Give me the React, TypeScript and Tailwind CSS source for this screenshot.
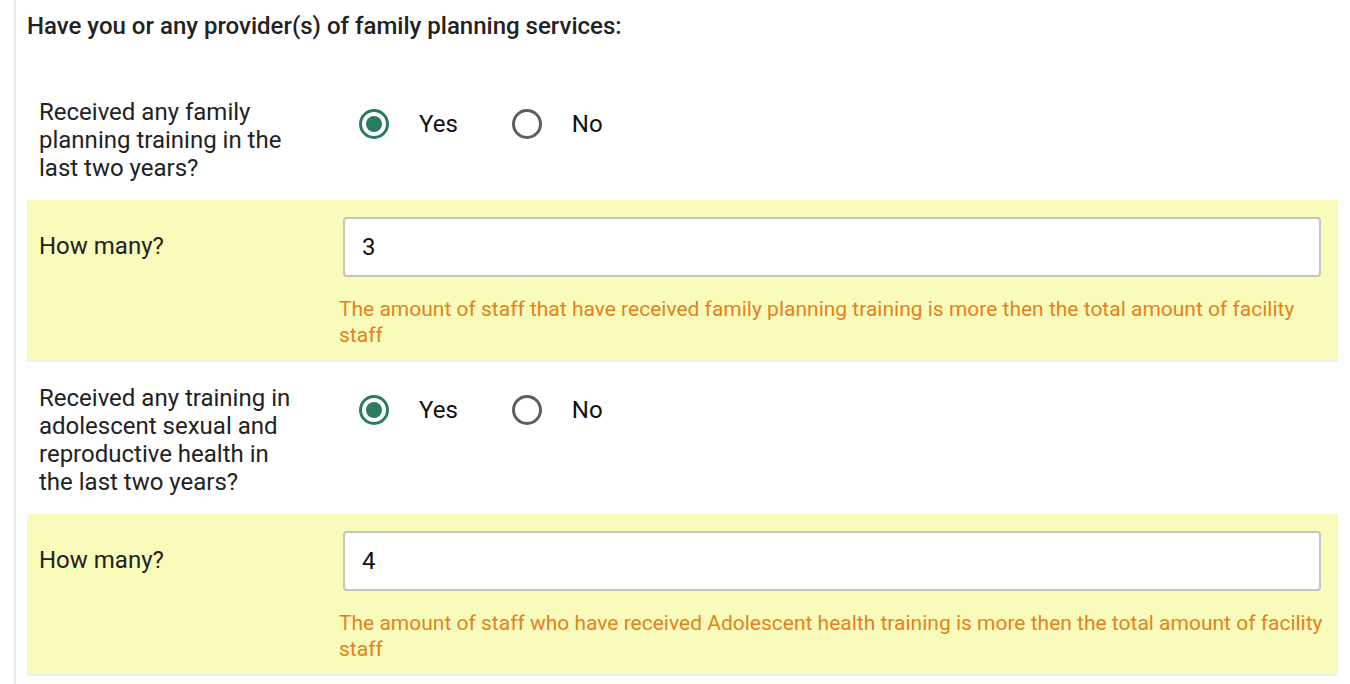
import { useState } from "react";

function Radio({ checked }: { checked: boolean }) {
  return (
    <span
      className={
        "flex h-[30px] w-[30px] items-center justify-center rounded-full border-[3px] " +
        (checked ? "border-[#2b7a62]" : "border-[#5e5e5e]")
      }
    >
      {checked && <span className="h-[16px] w-[16px] rounded-full bg-[#2b7a62]" />}
    </span>
  );
}

function YesNo({ value }: { value: string }) {
  const [v, setV] = useState(value);
  return (
    <div className="flex items-center pt-[16px] text-[24px] leading-7 text-[#111]">
      <button className="flex items-center" onClick={() => setV("yes")}>
        <Radio checked={v === "yes"} />
        <span className="ml-[30px]">Yes</span>
      </button>
      <button className="ml-[54px] flex items-center" onClick={() => setV("no")}>
        <Radio checked={v === "no"} />
        <span className="ml-[30px]">No</span>
      </button>
    </div>
  );
}

function QuestionRow({ label, value }: { label: string; value: string }) {
  return (
    <div className="flex px-3 pb-[18px]">
      <div className="w-[255px] shrink-0 pt-[5px] text-[24px] leading-7 text-[#222]">{label}</div>
      <div className="ml-[65px]">
        <YesNo value={value} />
      </div>
    </div>
  );
}

function CountRow({ value, warning }: { value: string; warning: string }) {
  return (
    <div className="flex border-b-2 border-[#efefef] bg-[#f8fbb9] pb-[12px] pl-3 pr-4 pt-[17px]">
      <div className="w-[300px] shrink-0 pt-[15px] text-[24px] leading-7 text-[#222]">How many?</div>
      <div className="min-w-0 flex-1">
        <input
          defaultValue={value}
          className="ml-[4px] block h-[60px] w-[978px] rounded-[4px] border-2 border-[#c4c4c4] bg-white px-[17px] text-[24px] text-[#111] outline-none"
        />
        <p className="-mr-[12px] mt-[19px] text-[21px] leading-[26px] text-[#e5821e]">{warning}</p>
      </div>
    </div>
  );
}

export default function App() {
  return (
    <div className="min-h-screen bg-white font-['Roboto',sans-serif]">
      <div className="ml-[14px] min-h-screen border-l-2 border-[#e8e8ee] pl-[11px] pr-[12px]">
        <h2 className="pt-3 text-[24px] font-medium leading-7 text-[#222]">
          Have you or any provider(s) of family planning services:
        </h2>
        <div className="mt-[53px]">
          <QuestionRow label="Received any family planning training in the last two years?" value="yes" />
          <CountRow
            value="3"
            warning="The amount of staff that have received family planning training is more then the total amount of facility staff"
          />
          <div className="pt-[17px]">
            <QuestionRow
              label="Received any training in adolescent sexual and reproductive health in the last two years?"
              value="yes"
            />
          </div>
          <CountRow
            value="4"
            warning="The amount of staff who have received Adolescent health training is more then the total amount of facility staff"
          />
        </div>
      </div>
    </div>
  );
}
